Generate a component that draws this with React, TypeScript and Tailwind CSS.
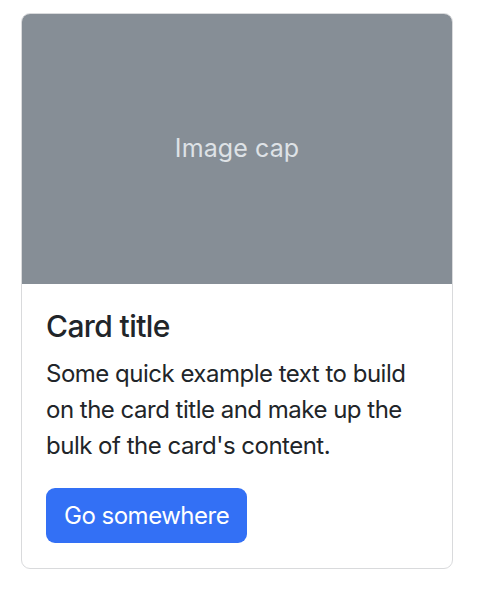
export default function App() {
  return (
    <div
      className="min-h-[592px] bg-white pl-[21px] pt-[13px]"
      style={{ fontFamily: "Inter, 'Noto Sans', 'Liberation Sans', sans-serif" }}
    >
      <div className="w-[432px] overflow-hidden rounded-[9px] border border-[#d9dadc] bg-white">
        <div className="flex h-[270px] items-center justify-center bg-[#868e96] text-[25px] tracking-[0.1px] text-[#dee2e6]">
          Image cap
        </div>
        <div className="px-[24px] pt-[24px] pb-[25px]">
          <h5 className="mb-[12px] text-[30px] font-medium leading-[36px] tracking-[-0.6px] text-[#212529]">
            Card title
          </h5>
          <p className="mb-[24px] text-[24px] leading-[36px] tracking-[-0.5px] text-[#212529]">
            Some quick example text to build on the card title and make up the bulk of the card's content.
          </p>
          <button className="flex h-[55px] items-center rounded-[9px] bg-[#3370f5] px-[18px] text-[24px] tracking-[-0.5px] text-white">
            Go somewhere
          </button>
        </div>
      </div>
    </div>
  );
}
